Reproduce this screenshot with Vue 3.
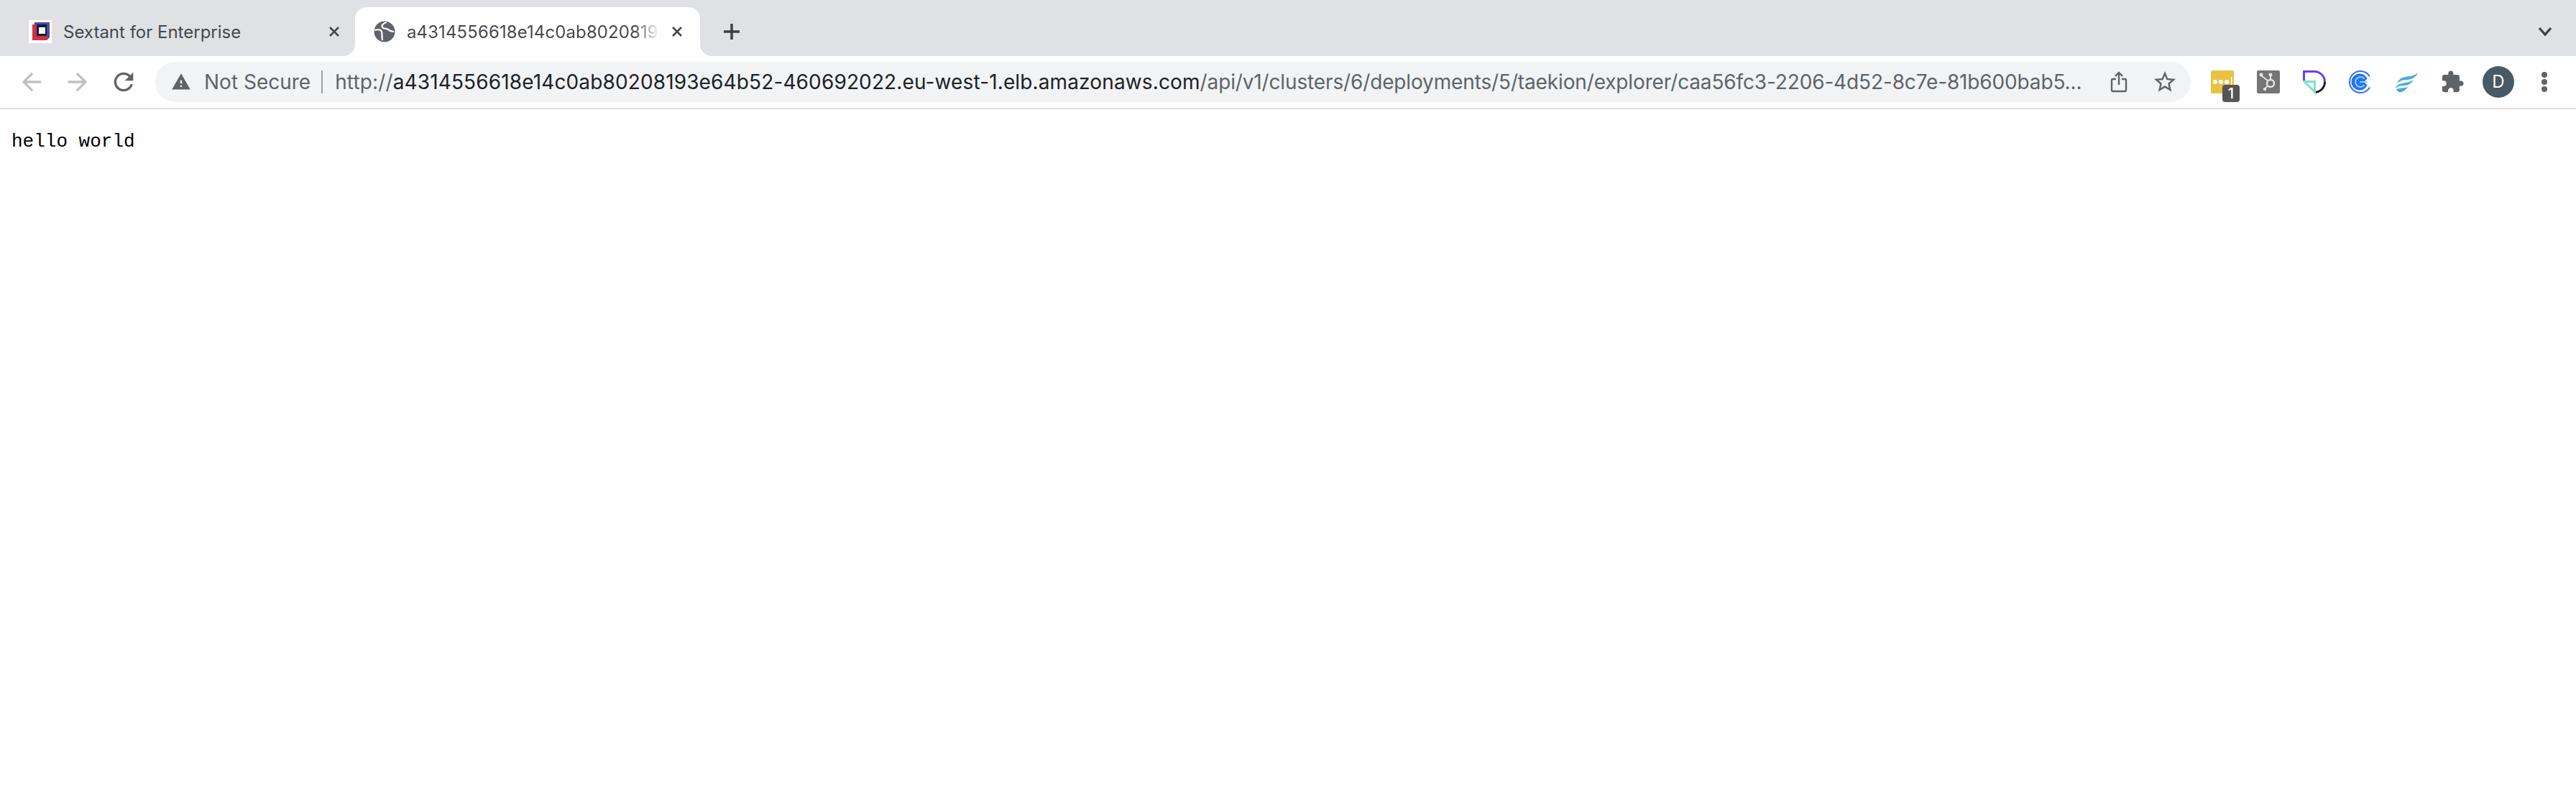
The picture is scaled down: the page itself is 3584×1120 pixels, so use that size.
<template>
  <div class="browser">
    <div class="tab-strip">
      <div class="tab">
        <svg class="favicon" width="32" height="32" viewBox="0 0 32 32">
          <rect width="32" height="32" fill="#fff" />
          <path d="M8 3h21v21l-4 4V7H8z" fill="#47509b" />
          <path d="M5 6h6v16h16l-2 6H5z" fill="#cf3341" />
          <path d="M11 6h14v16H11z" fill="#101a44" />
          <path d="M14 10h9v9h-9z" fill="#fff" />
        </svg>
        <span class="tab-title">Sextant for Enterprise</span>
        <svg class="tab-close" width="20" height="20" viewBox="0 0 20 20">
          <path d="M4 4l12 12M16 4L4 16" />
        </svg>
      </div>
      <div class="tab active">
        <svg class="globe" width="30" height="30" viewBox="0 0 30 30">
          <circle cx="15" cy="15" r="14.5" fill="#5f6368" />
          <path d="M1 13c4-1 9-1 10 2s0 7 1 12" fill="none" stroke="#fff" stroke-width="2.200" />
          <path d="M18 2c-4 1-8 4-6 7s6 1 8 3 4 3 8 3" fill="none" stroke="#fff" stroke-width="2.200" />
        </svg>
        <span class="tab-title faded">a4314556618e14c0ab8020819</span>
        <svg class="tab-close" width="20" height="20" viewBox="0 0 20 20">
          <path d="M4 4l12 12M16 4L4 16" />
        </svg>
      </div>
      <svg class="new-tab" width="24" height="24" viewBox="0 0 24 24">
        <path d="M12 1v22M1 12h22" />
      </svg>
      <div class="strip-spacer"></div>
      <svg class="tab-search" width="20" height="14" viewBox="0 0 20 14">
        <path d="M2 2l8 9 8-9" />
      </svg>
    </div>

    <div class="toolbar">
      <div class="nav-btn">
        <svg width="40" height="40" viewBox="0 0 24 24" fill="#bdc1c6">
          <path d="M20 11H7.830l5.590-5.590L12 4l-8 8 8 8 1.410-1.410L7.830 13H20v-2z" />
        </svg>
      </div>
      <div class="nav-btn">
        <svg width="40" height="40" viewBox="0 0 24 24" fill="#bdc1c6">
          <path d="M4 11h12.170l-5.590-5.590L12 4l8 8-8 8-1.410-1.410L16.170 13H4v-2z" />
        </svg>
      </div>
      <div class="nav-btn">
        <svg width="40" height="40" viewBox="0 0 24 24" fill="#5f6368">
          <path d="M17.650 6.350C16.200 4.900 14.210 4 12 4c-4.420 0-7.990 3.580-7.990 8s3.570 8 7.990 8c3.730 0 6.840-2.550 7.730-6h-2.080c-.82 2.330-3.040 4-5.650 4-3.310 0-6-2.690-6-6s2.690-6 6-6c1.660 0 3.140.69 4.220 1.780L13 11h7V4l-2.350 2.350z" />
        </svg>
      </div>

      <div class="omnibox">
        <svg class="warn" width="28" height="28" viewBox="0 0 24 24" fill="#5f6368">
          <path d="M1 21h22L12 2 1 21zm12-3h-2v-2h2v2zm0-4h-2v-4h2v4z" />
        </svg>
        <span class="security">Not Secure</span>
        <span class="divider"></span>
        <span class="url"><span class="dim">http://</span>a4314556618e14c0ab80208193e64b52-460692022.eu-west-1.elb.amazonaws.com<span class="dim path">/api/v1/clusters/6/deployments/5/taekion/explorer/caa56fc3-2206-4d52-8c7e-81b600bab5...</span></span>
        <svg class="share" width="24" height="30" viewBox="0 0 24 30" fill="none" stroke="#5f6368" stroke-width="2.400">
          <path d="M8 11H3.500A1.500 1.500 0 0 0 2 12.500V26.500A1.500 1.500 0 0 0 3.500 28h17a1.500 1.500 0 0 0 1.500-1.500V12.500A1.500 1.500 0 0 0 20.500 11H16" />
          <path d="M12 19V2M7 7l5-5 5 5" />
        </svg>
        <svg class="star" width="36" height="36" viewBox="0 0 24 24" fill="#5f6368">
          <path d="M22 9.240l-7.190-.620L12 2 9.190 8.630 2 9.240l5.460 4.730L5.820 21 12 17.270 18.180 21l-1.630-7.030L22 9.240zM12 15.400l-3.760 2.270 1-4.280-3.320-2.880 4.380-.380L12 6.100l1.710 4.040 4.380.380-3.320 2.880 1 4.280L12 15.400z" />
        </svg>
      </div>

      <div class="extensions">
        <div class="ext">
          <svg width="32" height="32" viewBox="0 0 32 32">
            <rect width="32" height="32" rx="2" fill="#e8c243" />
            <circle cx="6" cy="16" r="3" fill="#fff" />
            <circle cx="14" cy="16" r="3" fill="#fff" />
            <circle cx="22" cy="16" r="3" fill="#fff" />
            <rect x="28" y="9" width="1.500" height="14" fill="#fff" />
          </svg>
          <span class="badge">1</span>
        </div>
        <div class="ext">
          <svg width="32" height="32" viewBox="0 0 32 32">
            <rect width="32" height="32" rx="2" fill="#757575" />
            <g fill="none" stroke="#e4e4e4" stroke-width="2">
              <circle cx="19" cy="18" r="5" stroke-width="2.500" />
              <path d="M15 14L6 7M19 13V6M15 21l-4 5" />
            </g>
            <g fill="#e4e4e4">
              <circle cx="6" cy="6" r="2.500" />
              <circle cx="19" cy="6" r="2.500" />
              <circle cx="11" cy="26" r="2.200" />
            </g>
          </svg>
        </div>
        <div class="ext">
          <svg width="32" height="32" viewBox="0 0 32 32" fill="none" stroke-width="3">
            <path d="M1.500 15V1.500H16A14.500 14.500 0 0 1 30.500 16" stroke="#6a3df2" />
            <path d="M30.500 16A14.500 14.500 0 0 1 16 30.500" stroke="#1c1c1c" />
            <path d="M2 15.500H16.500V30z" stroke="#7de3cb" />
          </svg>
        </div>
        <div class="ext">
          <svg width="32" height="32" viewBox="0 0 32 32" fill="none">
            <path d="M29 8.500A15 15 0 1 0 29 23.500" stroke="#2e6ff2" stroke-width="2" />
            <path d="M25.500 11.500A11.500 11.500 0 1 0 25.500 20.500L21 16z" fill="#2e6ff2" />
            <path d="M21.500 11.500A7 7 0 1 0 21.500 20.500M15 16h10" stroke="#6fe0f5" stroke-width="2" />
          </svg>
        </div>
        <div class="ext">
          <svg width="32" height="32" viewBox="0 0 32 32" fill="#4aa8db">
            <path d="M32 3C28 7 22 8 15 9 8 10 5 13 3 18 7 14 12 13 18 13 24 12 29 10 32 3z" />
            <path d="M26 13C22 16 16 17 10 18 5 19 2 21 1 25 5 21 10 21 15 21 20 20 24 17 26 13z" />
            <path d="M18 23C13 25 7 24 2 26 3 29 6 31 9 30 13 29 16 26 18 23z" />
          </svg>
        </div>
        <div class="ext">
          <svg width="34" height="34" viewBox="0 0 24 24" fill="#5f6368">
            <path d="M20.500 11H19V7c0-1.100-.9-2-2-2h-4V3.500C13 2.120 11.880 1 10.500 1S8 2.120 8 3.500V5H4c-1.100 0-1.990.9-1.990 2v3.800H3.500c1.490 0 2.700 1.210 2.700 2.700s-1.210 2.700-2.700 2.700H2V20c0 1.100.9 2 2 2h3.800v-1.500c0-1.490 1.210-2.700 2.700-2.700 1.490 0 2.700 1.210 2.700 2.700V22H17c1.100 0 2-.9 2-2v-4h1.500c1.380 0 2.500-1.120 2.500-2.500S21.880 11 20.500 11z" />
          </svg>
        </div>
        <div class="ext">
          <span class="avatar">D</span>
        </div>
        <div class="ext">
          <svg width="10" height="30" viewBox="0 0 10 30" fill="#5f6368">
            <circle cx="5" cy="5" r="4" />
            <circle cx="5" cy="15" r="4" />
            <circle cx="5" cy="25" r="4" />
          </svg>
        </div>
      </div>
    </div>

    <pre class="content">hello world</pre>
  </div>
</template>

<script setup>
</script>

<style scoped>
.browser {
  min-height: 1120px;
  background: #fff;
  font-family: Inter, "Liberation Sans", sans-serif;
}

.tab-strip {
  display: flex;
  align-items: center;
  height: 78px;
  padding-top: 10px;
  box-sizing: border-box;
  background: #dfe1e5;
}

.tab {
  position: relative;
  display: flex;
  align-items: center;
  align-self: stretch;
  width: 494px;
  box-sizing: border-box;
  padding: 0 19px 0 40px;
}

.tab.active {
  width: 480px;
  padding: 0 22px 0 26px;
  background: #fff;
  border-radius: 16px 16px 0 0;
}

.tab.active::before,
.tab.active::after {
  content: "";
  position: absolute;
  bottom: 0;
  width: 16px;
  height: 16px;
}

.tab.active::before {
  left: -16px;
  background: radial-gradient(circle at 0 0, transparent 15.500px, #fff 16px);
}

.tab.active::after {
  right: -16px;
  background: radial-gradient(circle at 100% 0, transparent 15.500px, #fff 16px);
}

.favicon,
.globe {
  flex: none;
  margin-right: 16px;
}

.tab-title {
  flex: 1;
  min-width: 0;
  white-space: nowrap;
  font-size: 24px;
  color: #45484d;
}

.tab-title.faded {
  letter-spacing: 0.1px;
  -webkit-mask-image: linear-gradient(to right, #000 90%, transparent 100%);
  mask-image: linear-gradient(to right, #000 90%, transparent 100%);
}

.tab-close {
  flex: none;
  margin-left: 14px;
  fill: none;
  stroke: #45484d;
  stroke-width: 2.600;
}

.new-tab {
  flex: none;
  margin-left: 32px;
  fill: none;
  stroke: #3c4043;
  stroke-width: 3.500;
}

.strip-spacer {
  flex: 1;
}

.tab-search {
  flex: none;
  margin-right: 33px;
  fill: none;
  stroke: #3c4043;
  stroke-width: 3.200;
}

.toolbar {
  display: flex;
  align-items: center;
  height: 74px;
  padding: 0 12px;
  box-sizing: border-box;
  background: #fff;
  border-bottom: 2px solid #dfdfdf;
}

.nav-btn,
.ext {
  position: relative;
  display: flex;
  align-items: center;
  justify-content: center;
  flex: none;
  width: 64px;
}

.omnibox {
  display: flex;
  align-items: center;
  flex: 1;
  min-width: 0;
  height: 56px;
  margin: 0 12px;
  padding: 0 18px 0 22px;
  box-sizing: border-box;
  background: #f1f3f4;
  border-radius: 28px;
  font-size: 28px;
}

.warn {
  flex: none;
}

.security {
  flex: none;
  margin-left: 18px;
  color: #5f6368;
}

.divider {
  flex: none;
  width: 2px;
  height: 32px;
  margin: 0 17px 0 15px;
  background: #9aa0a6;
}

.url {
  flex: 1;
  min-width: 0;
  white-space: nowrap;
  letter-spacing: 0.13px;
  color: #202124;
}

.dim {
  color: #5f6368;
}

.path {
  letter-spacing: -0.14px;
}

.share {
  flex: none;
}

.star {
  flex: none;
  margin-left: 34px;
}

.extensions {
  display: flex;
  align-items: center;
}

.badge {
  position: absolute;
  right: 8px;
  top: 20px;
  width: 24px;
  height: 24px;
  border-radius: 4px;
  background: #555;
  color: #fff;
  font-size: 20px;
  font-weight: 500;
  line-height: 24px;
  text-align: center;
}

.avatar {
  width: 44px;
  height: 44px;
  border-radius: 50%;
  background: #475a65;
  color: #fff;
  font-size: 24px;
  line-height: 44px;
  text-align: center;
}

.content {
  margin: 0;
  padding: 30px 16px;
  font-family: "Liberation Mono", monospace;
  font-size: 26px;
  line-height: 30px;
  color: #000;
}
</style>

<style>
html,
body {
  margin: 0;
  background: #fff;
}
</style>
